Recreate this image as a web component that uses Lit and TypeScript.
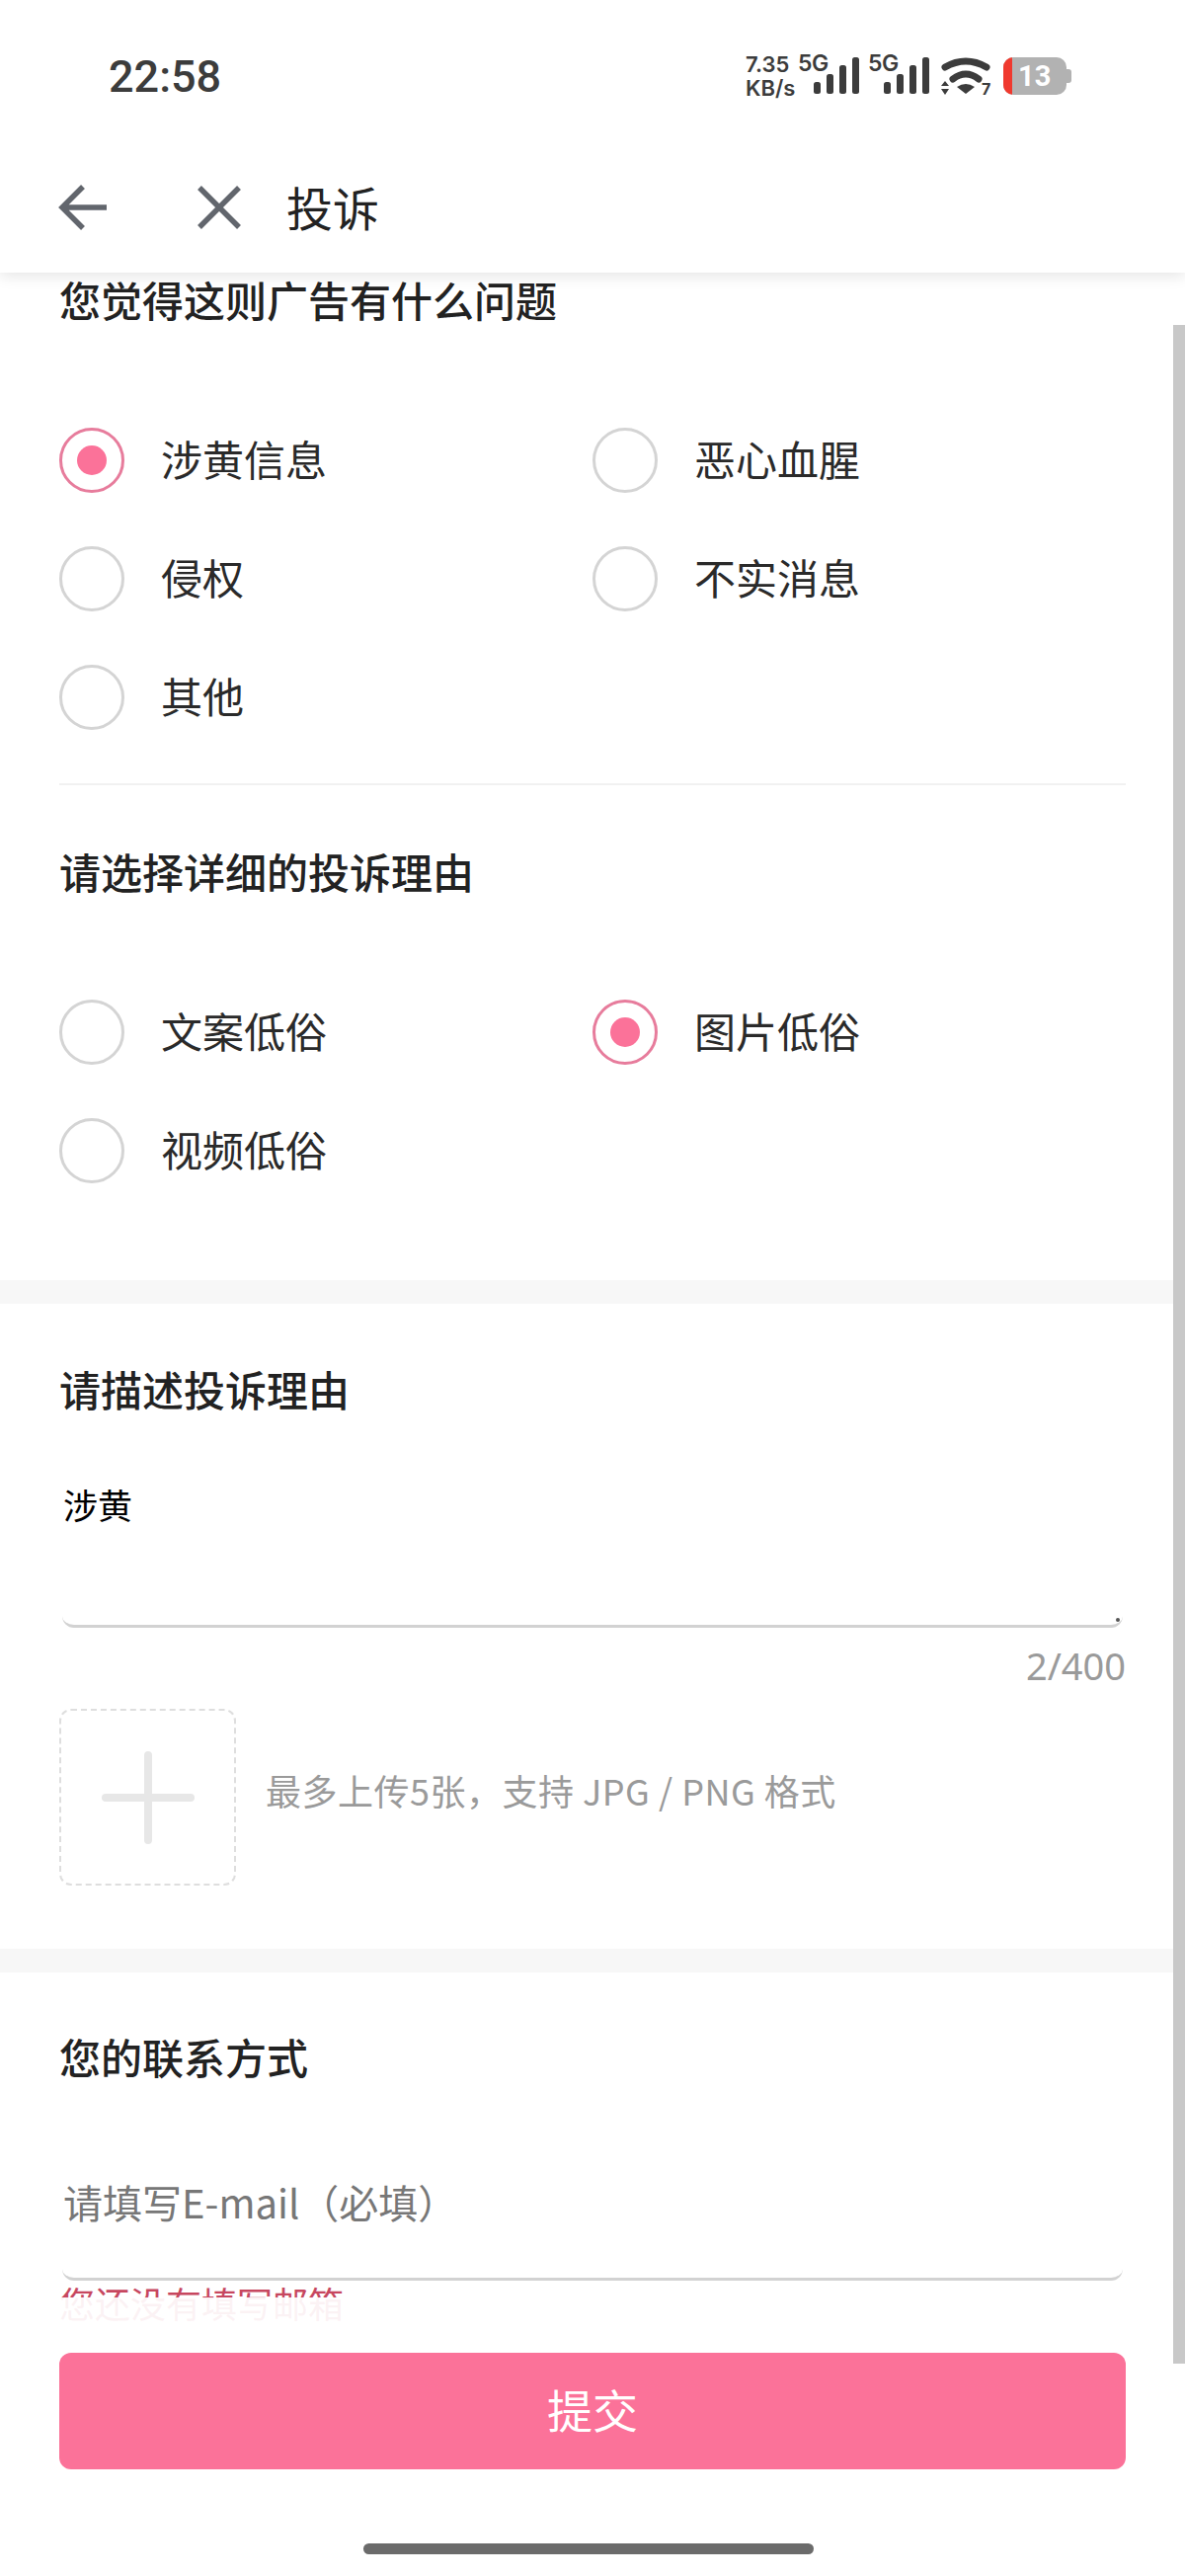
import { LitElement, css, html, svg } from "lit";
import { customElement } from "lit/decorators.js";

type Option = { label: string; checked?: boolean };

const problemOptions: Option[] = [
  { label: "涉黄信息", checked: true },
  { label: "恶心血腥" },
  { label: "侵权" },
  { label: "不实消息" },
  { label: "其他" },
];

const reasonOptions: Option[] = [
  { label: "文案低俗" },
  { label: "图片低俗", checked: true },
  { label: "视频低俗" },
];

// four rising bars, same for both sim cards
const signalBars = svg`
  <rect x="0" y="25" width="7" height="12" rx="2.5"></rect>
  <rect x="13" y="17" width="7" height="20" rx="2.5"></rect>
  <rect x="26" y="8" width="7" height="29" rx="2.5"></rect>
  <rect x="39" y="0" width="7" height="37" rx="2.5"></rect>
`;

@customElement("app-root")
export class AppRoot extends LitElement {
  static styles = css`
    :host {
      display: block;
      width: 1200px;
      height: 2608px;
      position: relative;
      overflow: hidden;
      background: #fff;
      color: #222;
      font-family: "Noto Sans CJK SC", "Noto Sans", sans-serif;
    }
    .top {
      position: relative;
      z-index: 2;
      background: #fff;
      box-shadow: 0 2px 16px rgba(0, 0, 0, 0.12);
    }
    .status {
      height: 144px;
      display: flex;
      align-items: flex-start;
      justify-content: space-between;
      box-sizing: border-box;
      padding: 46px 115px 0 110px;
      color: #3c3c3c;
    }
    .time {
      font-family: Roboto, sans-serif;
      font-weight: 500;
      font-size: 45px;
      line-height: 62px;
      padding-top: 1px;
    }
    .indicators {
      display: flex;
      align-items: flex-start;
      margin-top: 8px;
      font-family: Inter, Roboto, sans-serif;
      font-weight: 600;
    }
    .speed {
      width: 53px;
      margin-top: -1px;
      font-size: 22px;
      line-height: 24px;
      white-space: nowrap;
    }
    .sim {
      position: relative;
      width: 62px;
      height: 41px;
    }
    .sim + .sim {
      margin-left: 9px;
    }
    .sim span {
      position: absolute;
      left: 0;
      top: -2px;
      font-size: 23px;
      line-height: 25px;
      letter-spacing: -0.5px;
    }
    .sim svg {
      position: absolute;
      right: 0;
      top: 4px;
      fill: #3c3c3c;
    }
    .wifi {
      margin: 2px -2px 0 12px;
    }
    .battery {
      position: relative;
      margin: 4px 0 0 13px;
      width: 64px;
      height: 38px;
      box-sizing: border-box;
      border-radius: 10px;
      background: #b2b2b2;
      overflow: hidden;
      color: #fff;
      font-family: Roboto, sans-serif;
      font-weight: 700;
      font-size: 29px;
      line-height: 38px;
      padding-left: 15px;
    }
    .battery::before {
      content: "";
      position: absolute;
      left: 0;
      top: 0;
      bottom: 0;
      width: 9px;
      background: #f0392e;
    }
    .nub {
      width: 5px;
      height: 14px;
      margin-top: 16px;
      border-radius: 0 3px 3px 0;
      background: #b2b2b2;
    }
    .bar {
      height: 132px;
      display: flex;
      align-items: center;
      box-sizing: border-box;
      padding-left: 59px;
    }
    .bar svg {
      display: block;
      stroke: #62666d;
      fill: none;
      stroke-width: 5.5;
    }
    .bar .close {
      margin-left: 91px;
    }
    .bar h1 {
      margin: 0 0 0 46px;
      padding-bottom: 2px;
      font-size: 47px;
      line-height: 60px;
      font-weight: 400;
      color: #222;
    }
    .section {
      padding: 0 60px;
    }
    .title {
      margin: 0;
      padding-bottom: 7px;
      font-size: 42px;
      line-height: 53px;
      font-weight: 500;
      color: #222;
    }
    .options {
      display: grid;
      grid-template-columns: 540px 540px;
      grid-auto-rows: 120px;
      margin-top: 70px;
    }
    .option {
      display: flex;
      align-items: center;
      gap: 37px;
      font-size: 42px;
      color: #2a2a2a;
    }
    .option-label {
      padding-bottom: 6px;
    }
    .radio {
      width: 66px;
      height: 66px;
      box-sizing: border-box;
      border: 3px solid #d4d4d4;
      border-radius: 50%;
      display: flex;
      align-items: center;
      justify-content: center;
    }
    .radio.on {
      border-color: #e77c9c;
    }
    .radio.on::after {
      content: "";
      width: 30px;
      height: 30px;
      border-radius: 50%;
      background: #fb7299;
    }
    .divider {
      height: 2px;
      margin: 27px 60px 60px;
      background: #f1f1f1;
    }
    .band {
      height: 24px;
      background: #f7f7f7;
    }
    .field {
      position: relative;
      margin: 0 3px;
      border-bottom: 3px solid #d2d2d2;
      border-radius: 0 0 12px 12px;
      box-sizing: border-box;
      padding: 0 1px;
    }
    .describe {
      height: 181px;
      margin-top: 28px;
      padding-top: 30px;
      font-size: 35px;
      line-height: 52px;
      color: #000;
    }
    .grip {
      position: absolute;
      right: 3px;
      bottom: 3px;
      width: 4px;
      height: 4px;
      border-radius: 50%;
      background: #555;
    }
    .count {
      margin-top: 13px;
      text-align: right;
      font-size: 38px;
      line-height: 50px;
      color: #9a9a9a;
      font-family: "Noto Sans", sans-serif;
    }
    .upload {
      display: flex;
      align-items: center;
      gap: 30px;
      margin-top: 19px;
      margin-bottom: 64px;
    }
    .add {
      flex: none;
      width: 179px;
      height: 179px;
      box-sizing: border-box;
      border: 2px dashed #dedede;
      border-radius: 12px;
      display: flex;
      align-items: center;
      justify-content: center;
    }
    .hint {
      padding-bottom: 16px;
      font-size: 36px;
      letter-spacing: 0.5px;
      color: #9a9a9a;
      white-space: nowrap;
    }
    .email {
      height: 194px;
      padding-top: 84px;
      font-size: 40px;
      line-height: 60px;
      color: #777;
    }
    .error {
      font-size: 36px;
      line-height: 44px;
      color: #c7475f;
    }
    .scrollbar {
      position: absolute;
      z-index: 1;
      right: 0;
      top: 329px;
      width: 12px;
      height: 2064px;
      background: #c8c8c8;
    }
    .footer {
      position: absolute;
      left: 0;
      right: 0;
      bottom: 0;
      height: 282px;
      box-sizing: border-box;
      padding: 56px 60px 0;
      background: rgba(255, 255, 255, 0.93);
    }
    .submit {
      height: 118px;
      box-sizing: border-box;
      padding-bottom: 6px;
      border-radius: 12px;
      background: #fb7299;
      color: #fff;
      font-size: 46px;
      display: flex;
      align-items: center;
      justify-content: center;
    }
    .home {
      width: 456px;
      height: 11px;
      margin: 75px 0 0 308px;
      border-radius: 6px;
      background: #6b6b6b;
    }
  `;

  private optionGrid(options: Option[]) {
    return html`<div class="options">
      ${options.map(
        (o) => html`<div class="option">
          <span class="radio ${o.checked ? "on" : ""}"></span>
          <span class="option-label">${o.label}</span>
        </div>`
      )}
    </div>`;
  }

  private statusBar() {
    return html`<div class="status">
      <div class="time">22:58</div>
      <div class="indicators">
        <div class="speed">7.35<br />KB/s</div>
        <div class="sim">
          <span>5G</span>
          <svg width="46" height="37" viewBox="0 0 46 37">${signalBars}</svg>
        </div>
        <div class="sim">
          <span>5G</span>
          <svg width="46" height="37" viewBox="0 0 46 37">${signalBars}</svg>
        </div>
        <svg class="wifi" width="52" height="48" viewBox="0 0 52 48">
          <path d="M4 12 Q25 0 46 12" fill="none" stroke="#3c3c3c" stroke-width="7" stroke-linecap="round"></path>
          <path d="M12 24 Q25 14 38 24" fill="none" stroke="#3c3c3c" stroke-width="7" stroke-linecap="round"></path>
          <path d="M16 32 Q25 26 34 32 L25 39 Z" fill="#3c3c3c"></path>
          <path d="M4 26 L8 31 L0 31 Z M0 34 L8 34 L4 40 Z" fill="#3c3c3c"></path>
          <text x="41" y="40" font-size="16" font-weight="700" fill="#3c3c3c">7</text>
        </svg>
        <div class="battery">13</div>
        <div class="nub"></div>
      </div>
    </div>`;
  }

  render() {
    return html`
      <div class="top">
        ${this.statusBar()}
        <div class="bar">
          <svg width="50" height="48" viewBox="0 0 50 48">
            <path d="M49 24 H4 M25 3 L4 24 L25 45"></path>
          </svg>
          <svg class="close" width="44" height="44" viewBox="0 0 44 44">
            <path d="M2 2 L42 42 M42 2 L2 42"></path>
          </svg>
          <h1>投诉</h1>
        </div>
      </div>

      <div class="section">
        <h2 class="title">您觉得这则广告有什么问题</h2>
        ${this.optionGrid(problemOptions)}
      </div>
      <div class="divider"></div>
      <div class="section">
        <h2 class="title">请选择详细的投诉理由</h2>
        ${this.optionGrid(reasonOptions)}
      </div>

      <div class="band" style="margin-top:71px"></div>

      <div class="section" style="padding-top:59px">
        <h2 class="title">请描述投诉理由</h2>
        <div class="field describe">涉黄<span class="grip"></span></div>
        <div class="count">2/400</div>
        <div class="upload">
          <div class="add">
            <svg width="98" height="98" viewBox="0 0 98 98">
              <path d="M6 49 H92 M49 6 V92" stroke="#e7e7e7" stroke-width="8" stroke-linecap="round"></path>
            </svg>
          </div>
          <div class="hint">最多上传5张，支持 JPG / PNG 格式</div>
        </div>
      </div>

      <div class="band"></div>

      <div class="section" style="padding-top:58px">
        <h2 class="title">您的联系方式</h2>
        <div class="field email">请填写E-mail（必填）</div>
        <div class="error">您还没有填写邮箱</div>
      </div>

      <div class="scrollbar"></div>

      <div class="footer">
        <div class="submit">提交</div>
        <div class="home"></div>
      </div>
    `;
  }
}
